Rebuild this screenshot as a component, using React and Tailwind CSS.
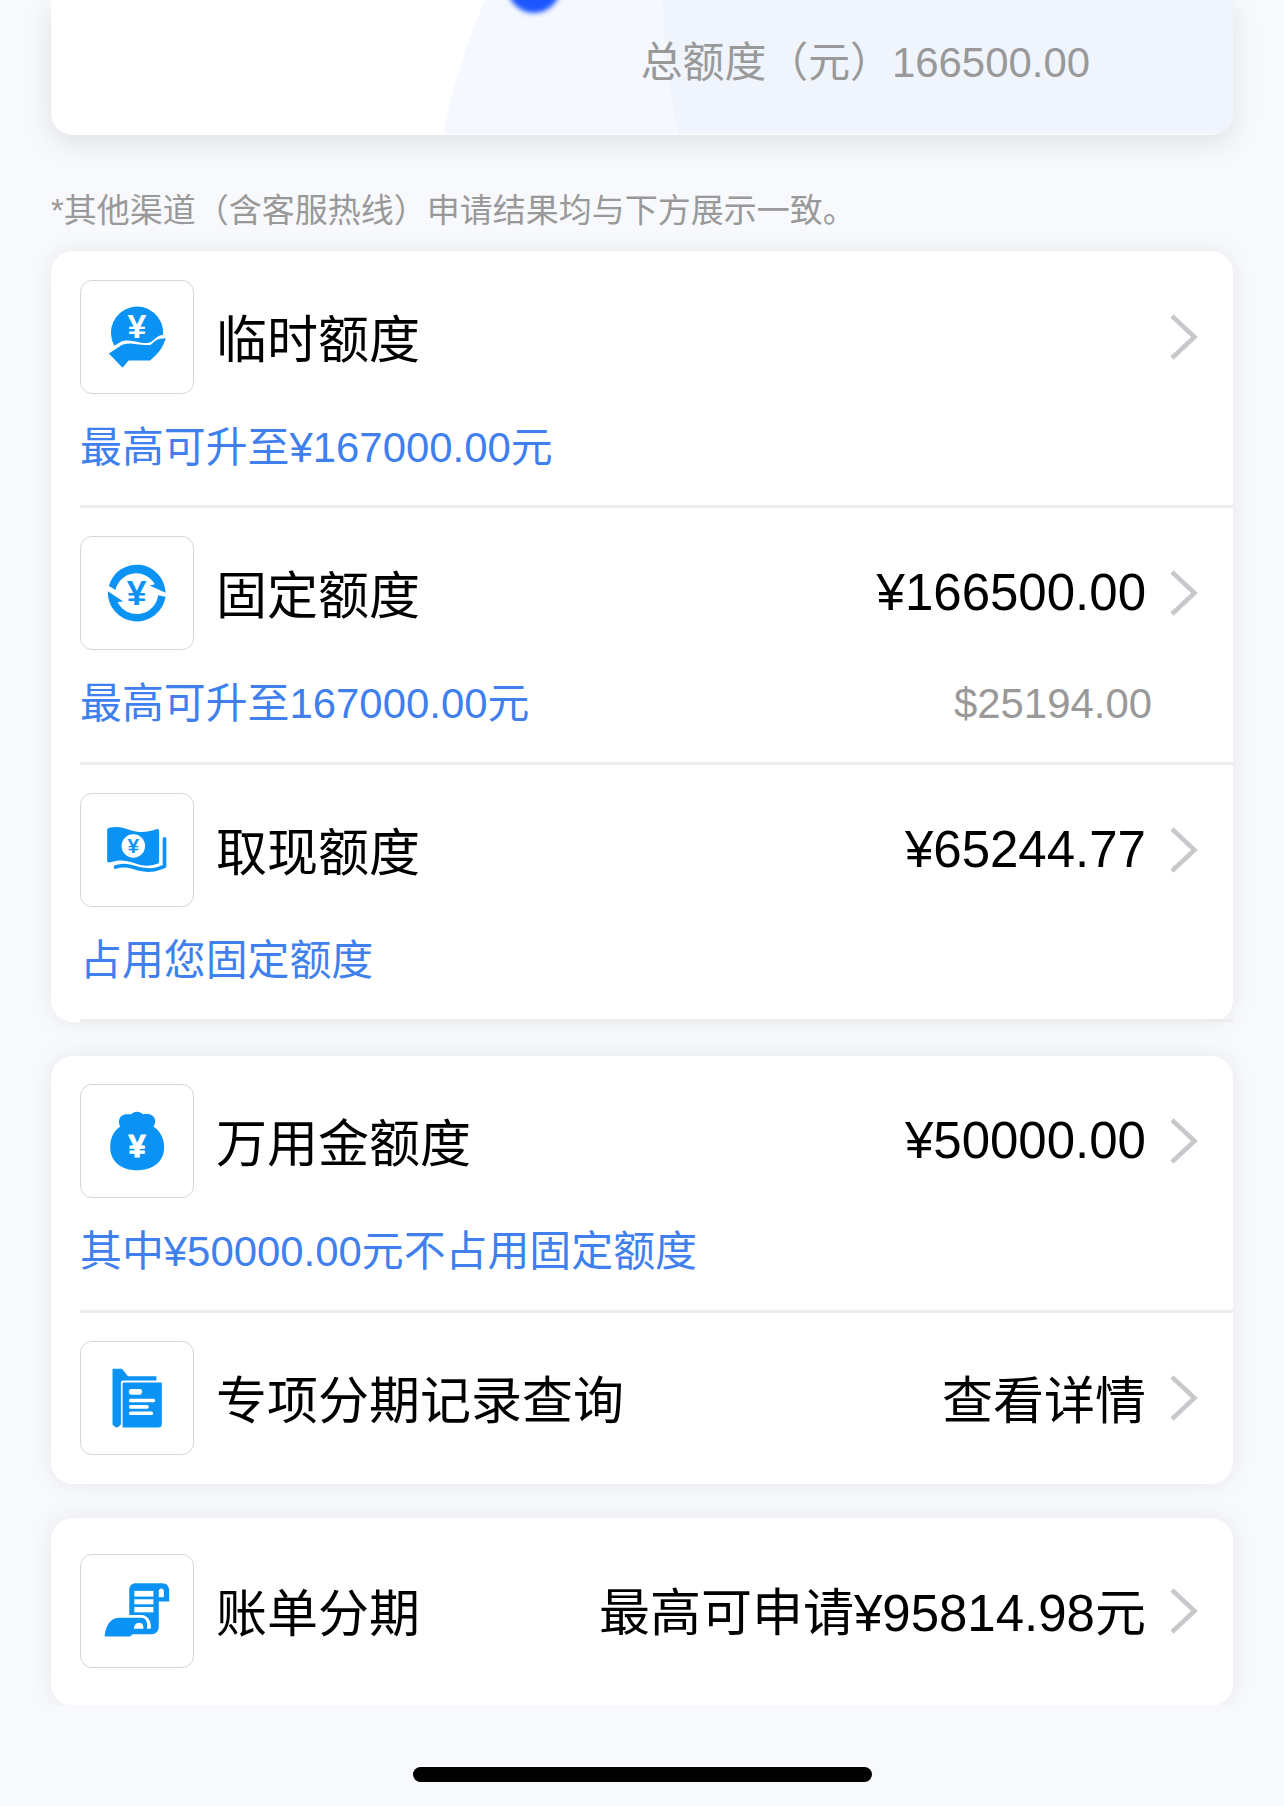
const BLUE = '#0a93f5';

function Yen({ x, y, size, fill = 'white', round = 0 }) {
  return (
    <text x={x} y={y} fontSize={size} fill={fill} stroke={fill} strokeWidth={round} strokeLinejoin="round" textAnchor="middle" className="font-bold">¥</text>
  );
}

function HandCoin() {
  return (
    <>
      <path fill={BLUE} d="M133 226 A78 78 0 1 1 279 194 C262 197 254 206 246 214 C240 220 228 220 214 218 C196 215 180 210 163 212 C150 214 143 223 133 226 Z" />
      <path fill={BLUE} d="M117 250 L149 229 C160 221 174 219 188 221 C204 223 222 225 240 225 C250 218 258 206 272 206 L287 205 C282 220 276 232 268 243 C260 254 250 262 240 271 L176 271 L158 293 Z" />
      <Yen x={201} y={205} size={101} />
    </>
  );
}

function CycleYen() {
  return (
    <>
      <path fill={BLUE} d="M117 180 A86 86 0 0 1 286 200 L239 179 L254 175 A63 63 0 0 0 137 192 Z" />
      <path fill={BLUE} d="M286 212 A86.5 86.5 0 0 1 114 196 L160 226 L143 228 A64 64 0 0 0 264 208 Z" />
      <Yen x={200} y={238} size={106} fill={BLUE} />
    </>
  );
}

function Cash() {
  return (
    <>
      <path fill={BLUE} d="M112 140 C112 136 116 135 122 134 C145 129 162 135 182 142 C206 150 232 149 258 139 C264 137 267 139 267 144 V235 C267 240 264 242 259 243 C236 251 212 248 192 240 C168 230 145 230 124 237 C117 239 112 239 112 233 Z" />
      <path fill="none" stroke={BLUE} strokeWidth="11" strokeLinecap="round" d="M283 168 V249 C278 252 274 253 269 255 C240 266 212 261 188 252 C170 246 154 246 137 252" />
      <circle cx="190" cy="189" r="35" fill="white" />
      <Yen x={190} y={211} size={62} fill={BLUE} />
    </>
  );
}

function MoneyBag() {
  return (
    <>
      <path fill={BLUE} d="M151 158 C143 145 147 126 164 122 C173 120 180 122 184 121 C190 111 212 111 218 121 C229 120 238 119 246 125 C259 133 256 150 250 158 C269 170 282 193 282 218 C282 266 246 288 201 288 C156 288 121 264 121 218 C121 192 133 170 151 158 Z" />
      <Yen x={201} y={248} size={92} round={3} />
    </>
  );
}

function Records() {
  return (
    <>
      <path fill={BLUE} d="M130 114 H153 C156 114 158 116 160 118 L174 136 H259 V149 H160 C154 149 153 153 153 158 V280 L146 287 C143 290 138 290 135 287 L128 280 V118 C128 115 129 114 130 114 Z" />
      <path fill={BLUE} d="M162 155 H271 C274 155 275 156 275 159 V279 C275 285 271 289 265 289 H158 V160 C158 157 159 155 162 155 Z" />
      <rect x="177" y="174" width="39" height="17" rx="7" fill="white" />
      <rect x="177" y="203" width="78" height="11" rx="5" fill="white" />
      <rect x="177" y="222" width="59" height="11" rx="5" fill="white" />
      <rect x="177" y="241" width="72" height="11" rx="5" fill="white" />
    </>
  );
}

function Bill() {
  return (
    <>
      <path fill={BLUE} d="M178 213 V137 C178 125 186 118 198 118 H276 C290 118 297 127 297 140 V173 H266 V247 C266 261 257 270 244 270 H187 C185 275 180 277 175 277 H109 C105 277 104 274 105 270 C109 247 120 221 147 221 H213 C226 221 231 230 231 242 L231 254 H242 C245 233 233 213 215 213 Z" />
      <path fill="white" d="M192 254 C192 242 199 236 210 237 C218 238 221 244 220 254 Z" />
      <path fill="white" d="M266 160 V142 C266 131 281 131 281 142 V160 Z" />
      <rect x="193" y="141" width="57" height="17" fill="white" />
      <rect x="193" y="166" width="57" height="15" fill="white" />
      <rect x="193" y="189" width="57" height="16" fill="white" />
    </>
  );
}

const groups = [
  [
    { icon: HandCoin, title: '临时额度', note: '最高可升至¥167000.00元', pad: 'pt-[29px]' },
    { icon: CycleYen, title: '固定额度', value: '¥166500.00', note: '最高可升至167000.00元', side: '$25194.00' },
    { icon: Cash, title: '取现额度', value: '¥65244.77', note: '占用您固定额度' },
  ],
  [
    { icon: MoneyBag, title: '万用金额度', value: '¥50000.00', note: '其中¥50000.00元不占用固定额度' },
    { icon: Records, title: '专项分期记录查询', value: '查看详情', height: 'h-[171px]', valuePad: 'pt-[7px]' },
  ],
  [{ icon: Bill, title: '账单分期', value: '最高可申请¥95814.98元', height: 'h-[188px]', pad: 'pt-[36px]', valuePad: 'pt-[6px]' }],
];

function Row({ icon: Icon, title, value, note, side, height = 'h-[257px]', pad = 'pt-[28px]', valuePad = '' }) {
  return (
    <div className={`ml-[29px] ${height} ${pad} ${note ? 'border-b-3 border-[#ededed]' : ''}`}>
      <div className="flex h-[114px] items-center pr-[35px]">
        <div className="h-[114px] w-[114px] shrink-0 rounded-xl border border-[#d6d6d6]">
          <svg viewBox="34 34 334 334" className="h-full w-full"><Icon /></svg>
        </div>
        <span className="ml-[22px] pt-[8px] text-[51px] leading-[60px] whitespace-nowrap text-black">{title}</span>
        <span className={`ml-auto text-[51px] leading-[60px] whitespace-nowrap text-black ${valuePad}`}>{value}</span>
        <svg viewBox="0 0 28 46" className="ml-[24px] h-[46px] w-[28px] shrink-0" fill="none" stroke="#c7c7cc" strokeWidth="4.5">
          <path d="M2 2 L24.5 23 L2 44" />
        </svg>
      </div>
      {note && (
        <div className="mt-[29px] flex justify-between pr-[81px] text-[41.9px] leading-[50px] whitespace-nowrap">
          <span className="text-[#3f7fee]">{note}</span>
          <span className="text-[#999999]">{side}</span>
        </div>
      )}
    </div>
  );
}

export default function App() {
  return (
    <div className="flex h-[1806px] w-[1284px] flex-col overflow-hidden bg-[#f8f9fd] font-['Liberation_Sans','Noto_Sans_CJK_SC',sans-serif]">
      <div className="h-[1705px] overflow-hidden px-[51px]">
        <section className="relative h-[135px] rounded-b-[22px] bg-white shadow-[0_8px_28px_rgba(0,0,0,0.1)]">
          <svg viewBox="0 0 1182 135" className="absolute inset-0 h-[135px] w-[1182px] rounded-b-[22px]">
            <defs>
              <filter id="soft" x="-30%" y="-30%" width="160%" height="160%"><feGaussianBlur stdDeviation="2.5" /></filter>
            </defs>
            <path fill="#f5f8fe" d="M434 0 Q406 64 392 134 H1182 V0 Z" />
            <path fill="#eff4fd" d="M612 0 Q613 70 628 134 H1182 V0 Z" />
            <circle cx="483" cy="-14" r="27" fill="#1a56ff" filter="url(#soft)" />
          </svg>
          <p className="relative pt-[37px] pr-[143px] text-right text-[41.9px] leading-[52px] text-[#999999]">总额度（元）166500.00</p>
        </section>
        <p className="mt-[51px] mb-[15px] text-[33px] leading-[50px] whitespace-nowrap text-[#999999]">*其他渠道（含客服热线）申请结果均与下方展示一致。</p>
        <div className="flex flex-col gap-[34px]">
          {groups.map((rows, i) => (
            <section key={i} className="rounded-[22px] bg-white shadow-[0_0_22px_rgba(0,0,0,0.07)]">
              {rows.map((row) => <Row key={row.title} {...row} />)}
            </section>
          ))}
        </div>
      </div>
      <div className="mx-auto mt-[62px] h-[15px] w-[459px] rounded-full bg-black" />
    </div>
  );
}
